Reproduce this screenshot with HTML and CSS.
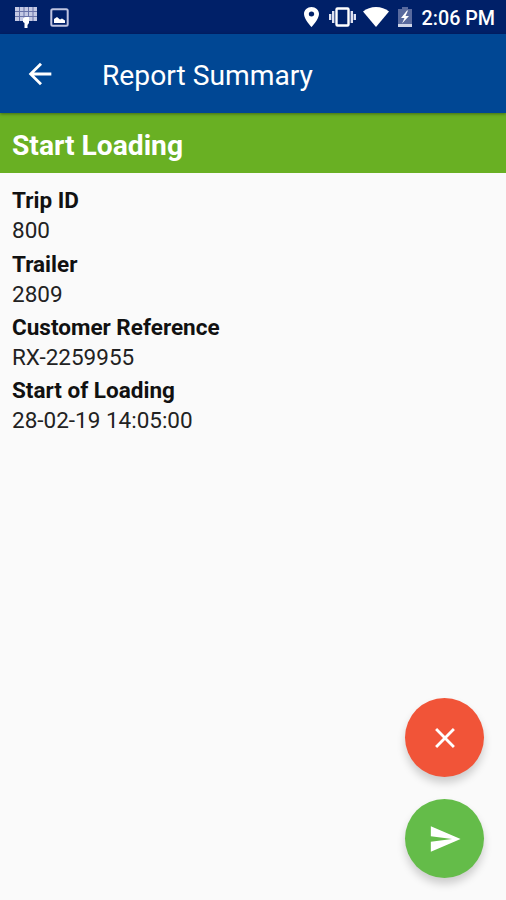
FILE: index.html
```html
<!DOCTYPE html>
<html lang="en">

<head>
    <meta charset="UTF-8">
    <meta name="viewport" content="width=device-width, initial-scale=1.0">
    <title>Report Summary</title>
    <link rel="stylesheet" href="styles.css">
</head>

<body>
    <div class="status-bar">
        <div class="status-left">
            <!-- keyboard -->
            <svg width="22" height="22" viewBox="0 0 22 22">
                <path fill="#c4c9e4" d="M0 1h22v14H0z"/>
                <path stroke="#6872a8" stroke-width="1" d="M4.500 1v14M9 1v14M13.500 1v14M18 1v14M0 5.500h22M0 10.500h22"/>
                <path fill="#fff" d="M8 13q0-2 3-2h3v6l-1.500 2v3h-3v-5l-1.500-1z"/>
            </svg>
            <!-- picture -->
            <svg class="picture-icon" width="19" height="19" viewBox="0 0 19 19">
                <rect x="1.300" y="1.300" width="16.400" height="16.400" rx="1.500" fill="none" stroke="#bfc4e0" stroke-width="2"/>
                <path fill="#fff" d="M4 15v-4l3-2 3 2.500 2-1 3 2V15z"/>
            </svg>
        </div>
        <div class="status-right">
            <!-- location -->
            <svg class="pin-icon" width="15" height="20" viewBox="5 2 14 20" preserveAspectRatio="none">
                <path fill="#fff" d="M12 2C8.130 2 5 5.130 5 9c0 5.250 7 13 7 13s7-7.750 7-13c0-3.870-3.130-7-7-7zm0 9.500a2.500 2.500 0 1 1 0-5 2.500 2.500 0 0 1 0 5z"/>
            </svg>
            <!-- vibrate -->
            <svg class="vibrate-icon" width="27" height="20" viewBox="0 0 27 20">
                <rect x="7.500" y="1.500" width="12" height="17" rx="1" fill="none" stroke="#fff" stroke-width="2.400"/>
                <path stroke="#dfe2f2" stroke-width="2.400" d="M4.200 4v12M22.800 4v12M1.200 7v6M25.800 7v6"/>
            </svg>
            <!-- wifi -->
            <svg class="wifi-icon" width="26" height="20" viewBox="0 0 26 20">
                <path fill="#fff" d="M13 20L0 4.500Q5.500 0 13 0t13 4.500z"/>
            </svg>
            <!-- battery -->
            <svg class="battery-icon" width="14" height="20" viewBox="0 0 14 20">
                <path fill="#596a9e" d="M4 0h6v2h4v18H0V2h4z"/>
                <path fill="#cfd5e8" d="M0 17h14v3H0z"/>
                <path fill="#fff" d="M9 3.500L3 11h3.500L4 16.500 11 9H7.500L10 3.500z"/>
            </svg>
            <span class="time">2:06 PM</span>
        </div>
    </div>

    <div class="toolbar">
        <button class="back" aria-label="Back">
            <svg width="34" height="34" viewBox="0 0 24 24">
                <path fill="#fff" d="M20 11H7.830l5.590-5.590L12 4l-8 8 8 8 1.410-1.410L7.830 13H20v-2z"/>
            </svg>
        </button>
        <h1 class="title">Report Summary</h1>
    </div>

    <h2 class="section-title">Start Loading</h2>

    <dl class="details">
        <dt>Trip ID</dt>
        <dd>800</dd>
        <dt>Trailer</dt>
        <dd>2809</dd>
        <dt>Customer Reference</dt>
        <dd>RX-2259955</dd>
        <dt>Start of Loading</dt>
        <dd>28-02-19 14:05:00</dd>
    </dl>

    <div class="actions">
        <button class="fab cancel" aria-label="Cancel">
            <svg width="34" height="34" viewBox="0 0 24 24">
                <path fill="#fff" d="M19 6.410L17.590 5 12 10.590 6.410 5 5 6.410 10.590 12 5 17.590 6.410 19 12 13.410 17.590 19 19 17.590 13.410 12z"/>
            </svg>
        </button>
        <button class="fab send" aria-label="Send">
            <svg width="34" height="34" viewBox="0 0 24 24">
                <path fill="#fff" d="M2.010 21L23 12 2.010 3 2 10l15 2-15 2z"/>
            </svg>
        </button>
    </div>
</body>

</html>
```

FILE: styles.css
```css
body {
    display: flex;
    flex-direction: column;
    height: 100vh;
    margin: 0;
    overflow: hidden;
    background-color: #fafafa;
    color: #111;
    font-family: Roboto, "Liberation Sans", sans-serif;
}

svg {
    display: block;
    flex: none;
}

button {
    display: flex;
    align-items: center;
    justify-content: center;
    padding: 0;
    border: none;
    cursor: pointer;
}

.status-bar {
    display: flex;
    justify-content: space-between;
    align-items: center;
    height: 34px;
    padding: 0 11px 0 15px;
    background-color: #002068;
}

.status-left,
.status-right {
    display: flex;
    align-items: center;
}

.picture-icon {
    margin-left: 13px;
}

.vibrate-icon {
    margin-left: 10px;
}

.wifi-icon {
    margin-left: 7px;
}

.battery-icon {
    margin: 0 10px 0 9px;
}

.time {
    color: #fff;
    font-size: 19.7px;
    font-weight: 500;
    line-height: 34px;
    padding-top: 3px;
}

.toolbar {
    position: relative;
    display: flex;
    align-items: center;
    height: 79px;
    padding-left: 23px;
    background-color: #004794;
    box-shadow: 0 1px 3px rgba(0, 0, 0, 0.4);
}

.back {
    background: none;
}

.title {
    margin: 4px 0 0 45px;
    color: #fff;
    font-size: 28.2px;
    font-weight: 400;
}

.section-title {
    height: 60px;
    margin: 0;
    padding-left: 12px;
    background-color: #69b023;
    color: #fff;
    font-size: 28.2px;
    font-weight: 700;
    line-height: 65px;
}

.details {
    margin: 0;
    padding: 11.4px 12px;
    font-size: 22.5px;
}

.details dt {
    height: 33px;
    font-weight: 700;
    line-height: 33px;
}

.details dd {
    height: 30.3px;
    margin: 0;
    color: #222;
    line-height: 27px;
}

.actions {
    display: flex;
    flex-direction: column;
    gap: 22px;
    margin: auto 22px 22px auto;
}

.fab {
    width: 79px;
    height: 79px;
    border-radius: 50%;
    box-shadow: 0 6px 9px rgba(0, 0, 0, 0.18);
}

.cancel {
    background-color: #f15438;
}

.send {
    background-color: #64bc49;
}
```
